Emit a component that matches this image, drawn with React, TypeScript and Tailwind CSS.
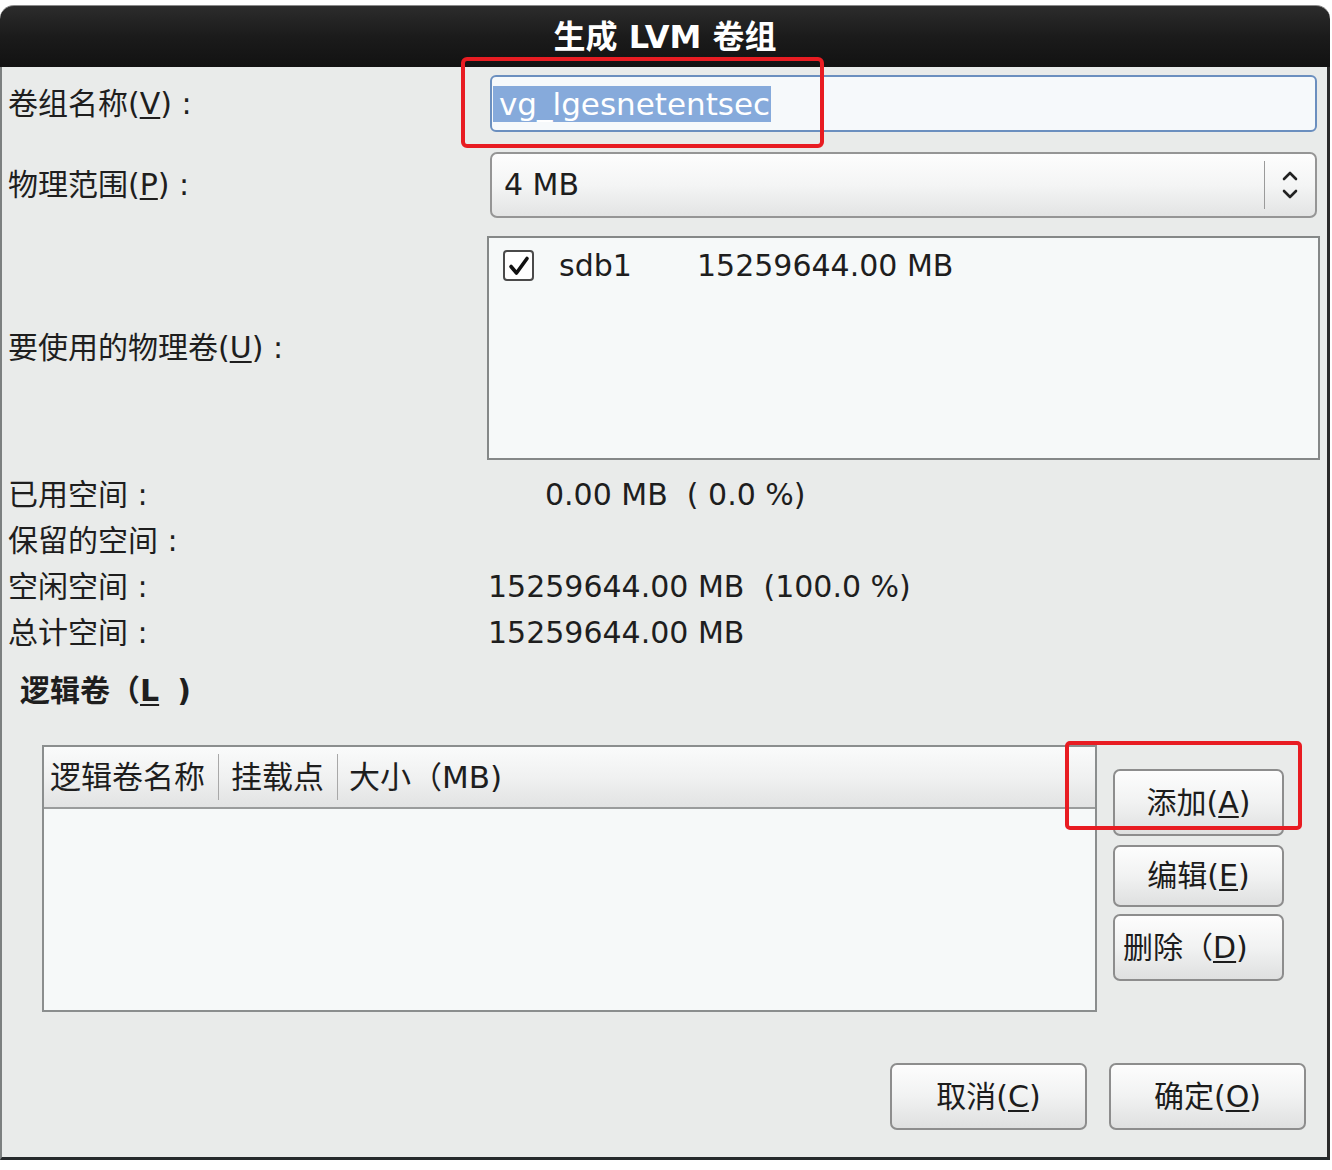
import React from 'react'

function Mn({ children }: { children: React.ReactNode }) {
  return <span className="underline decoration-[2px] underline-offset-[3px]">{children}</span>
}

function GtkButton({ className, children }: { className: string; children: React.ReactNode }) {
  return (
    <div
      className={`flex items-center justify-center rounded-[7px] border-[2px] border-[#8d8d8d] bg-gradient-to-b from-[#fdfdfd] via-[#f1f2f2] to-[#dfe0e0] text-[30px] leading-none text-[#1c1c1c] ${className}`}
    >
      {children}
    </div>
  )
}

function StatRow({ label, value, indent }: { label: string; value?: string; indent?: boolean }) {
  return (
    <div className="flex h-[46px] items-center leading-none">
      <div className="w-[480px]">{label}</div>
      {value && <div className={`whitespace-pre ${indent ? 'pl-[57px]' : ''}`}>{value}</div>}
    </div>
  )
}

export default function App() {
  return (
    <div className="relative h-[1170px] w-[1332px] overflow-hidden bg-white pt-[5px] font-['DejaVu_Sans','Noto_Sans_CJK_SC',sans-serif] text-[30px] text-[#1e1e1e]">
      <div className="w-[1330px]">
        {/* title bar */}
        <div className="flex h-[62px] items-center justify-center rounded-t-[14px] border-t border-[#8a8a8a] bg-gradient-to-b from-[#2c2c2c] via-[#1b1b1b] to-[#121212]">
          <span className="text-[32px] font-bold leading-none text-white">生成 LVM 卷组</span>
        </div>

        {/* body */}
        <div className="h-[1093px] border-b-[3px] border-l-[2px] border-r-[3px] border-b-[#262a2c] border-l-[#7c8080] border-r-[#2a2a2a] bg-[#e9ebea] pl-[6px] pt-[8px]">
          {/* volume group name */}
          <div className="flex items-center">
            <div className="w-[482px] leading-none">
              卷组名称(<Mn>V</Mn>) :
            </div>
            <div className="flex h-[57px] w-[827px] items-center rounded-[6px] border-[2px] border-[#6b8fbf] bg-[#f6f9fb] pl-[1px]">
              <span className="bg-[#86aadb] pl-[6px] pr-[1px] text-[31px] leading-[36px] text-white">vg_lgesnetentsec</span>
            </div>
          </div>

          {/* physical extent */}
          <div className="mt-[20px] flex items-center">
            <div className="w-[482px] leading-none">
              物理范围(<Mn>P</Mn>) :
            </div>
            <div className="flex h-[66px] w-[827px] items-center rounded-[7px] border-[2px] border-[#959595] bg-gradient-to-b from-[#fdfdfd] via-[#f4f5f5] to-[#e3e4e4]">
              <span className="flex-1 pl-[12px] leading-none">4 MB</span>
              <div className="h-[48px] w-px bg-[#9a9a9a]" />
              <div className="flex w-[50px] justify-center">
                <svg width="16" height="30" viewBox="0 0 16 30" fill="none" stroke="#222" strokeWidth="2.6" strokeLinecap="round" strokeLinejoin="round">
                  <polyline points="2,9 8,3 14,9" />
                  <polyline points="2,21 8,27 14,21" />
                </svg>
              </div>
            </div>
          </div>

          {/* physical volumes */}
          <div className="mt-[18px] flex items-center">
            <div className="w-[479px] leading-none">
              要使用的物理卷(<Mn>U</Mn>) :
            </div>
            <div className="h-[224px] w-[833px] border-[2px] border-[#858888] bg-[#f6f9f9] pl-[14px] pt-[12px]">
              <div className="flex items-center">
                <div className="flex h-[31px] w-[31px] items-center justify-center rounded-[4px] border-[2px] border-[#4a4a4a] bg-white">
                  <svg width="24" height="24" viewBox="0 0 24 24" fill="none" stroke="#111" strokeWidth="3.6" strokeLinecap="round" strokeLinejoin="round">
                    <polyline points="4,12.5 9.5,19 20,4.5" />
                  </svg>
                </div>
                <span className="ml-[25px] w-[138px] leading-none">sdb1</span>
                <span className="leading-none">15259644.00 MB</span>
              </div>
            </div>
          </div>

          {/* stats */}
          <div className="mt-[12px]">
            <StatRow label="已用空间 :" value="0.00 MB  ( 0.0 %)" indent />
            <StatRow label="保留的空间 :" />
            <StatRow label="空闲空间 :" value="15259644.00 MB  (100.0 %)" />
            <StatRow label="总计空间 :" value="15259644.00 MB" />
          </div>

          <div className="mt-[12px] flex h-[46px] items-center pl-[12px] font-bold leading-none">
            逻辑卷（<Mn>L</Mn><span className="pl-[18px]">)</span>
          </div>

          {/* logical volumes */}
          <div className="mt-[31px] flex">
            <div className="ml-[34px] h-[267px] w-[1055px] border-[2px] border-[#8b8e8e] bg-[#f6f9f9]">
              <div className="flex h-[62px] items-center border-b-[2px] border-[#9a9c9c] bg-gradient-to-b from-[#fafbfb] via-[#f0f1f1] to-[#e2e3e3] text-[31px] leading-none">
                <div className="flex h-[46px] w-[175px] items-center border-r border-[#a8a8a8] pl-[6px]">逻辑卷名称</div>
                <div className="flex h-[46px] w-[119px] items-center border-r border-[#a8a8a8] pl-[12px]">挂载点</div>
                <div className="pl-[11px]">大小（MB)</div>
              </div>
            </div>
            <div className="ml-[16px] flex w-[171px] flex-col pt-[24px]">
              <GtkButton className="h-[67px]">
                添加(<Mn>A</Mn>)
              </GtkButton>
              <GtkButton className="mt-[9px] h-[62px]">
                编辑(<Mn>E</Mn>)
              </GtkButton>
              <GtkButton className="mt-[7px] h-[67px] justify-start pl-[8px]">
                删除（<Mn>D</Mn>)
              </GtkButton>
            </div>
          </div>

          {/* dialog buttons */}
          <div className="mt-[51px] flex justify-end gap-[22px] pr-[21px]">
            <GtkButton className="h-[67px] w-[197px]">
              取消(<Mn>C</Mn>)
            </GtkButton>
            <GtkButton className="h-[67px] w-[197px]">
              确定(<Mn>O</Mn>)
            </GtkButton>
          </div>
        </div>
      </div>

      {/* red annotation boxes */}
      <div className="absolute left-[461px] top-[57px] h-[91px] w-[363px] rounded-[6px] border-[4px] border-[#e81c22]" />
      <div className="absolute left-[1065px] top-[741px] h-[89px] w-[237px] rounded-[5px] border-[4px] border-[#e81c22]" />
    </div>
  )
}
